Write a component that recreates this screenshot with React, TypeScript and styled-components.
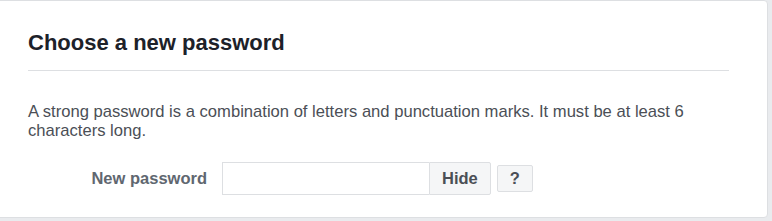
import React from 'react'
import styled, { createGlobalStyle } from 'styled-components'

const GlobalStyle = createGlobalStyle`
    html, body {
        margin: 0;
        padding: 0;
        background: #e9ebee;
        font-family: Arial, "Liberation Sans", Helvetica, sans-serif;
    }
`

const Page = styled.div`
    width: 772px;
    height: 221px;
    overflow: hidden;
    box-sizing: border-box;
    padding-right: 4px;
    padding-bottom: 3px;
`

const Card = styled.div`
    height: 100%;
    box-sizing: border-box;
    margin-left: -4px;
    background: #fff;
    border: 1px solid #dddfe2;
    border-radius: 0 4px 4px 0;
    padding: 0 38px 0 31px;
`

const Title = styled.h2`
    margin: 0;
    padding: 29px 0 14px;
    font-size: 22px;
    line-height: 26px;
    font-weight: bold;
    color: #1d2129;
    border-bottom: 1px solid #dddfe2;
`

const Body = styled.div`
    padding-top: 31px;
`

const Description = styled.p`
    margin: 0;
    font-size: 16.6px;
    line-height: 19px;
    color: #4b4f56;
`

const FormRow = styled.div`
    display: flex;
    align-items: center;
    margin-top: 22px;
`

const Label = styled.label`
    width: 194px;
    padding-right: 15px;
    box-sizing: border-box;
    flex-shrink: 0;
    text-align: right;
    font-size: 16.5px;
    font-weight: bold;
    color: #606770;
`

const Input = styled.input`
    width: 207px;
    height: 33px;
    box-sizing: border-box;
    border: 1px solid #dddfe2;
    border-right: none;
    padding: 0 8px;
    font-size: 16px;
    outline: none;
`

const Button = styled.button<{ small?: boolean }>`
    height: ${({ small }) => small ? '27px' : '33px'};
    box-sizing: border-box;
    padding: 0 12px;
    margin-left: ${({ small }) => small ? '6px' : '0'};
    background: #f5f6f7;
    border: 1px solid #dddfe2;
    border-radius: ${({ small }) => small ? '2px' : '0 2px 2px 0'};
    font-family: inherit;
    font-size: 16.5px;
    font-weight: bold;
    color: #4b4f56;
`

export default function App() {
    return (
        <>
            <GlobalStyle />
            <Page>
                <Card>
                    <Title>Choose a new password</Title>
                    <Body>
                        <Description>
                            A strong password is a combination of letters and punctuation marks. It must be at least 6 characters long.
                        </Description>
                        <FormRow>
                            <Label htmlFor="pw">New password</Label>
                            <Input id="pw" type="text" />
                            <Button>Hide</Button>
                            <Button small>?</Button>
                        </FormRow>
                    </Body>
                </Card>
            </Page>
        </>
    )
}
